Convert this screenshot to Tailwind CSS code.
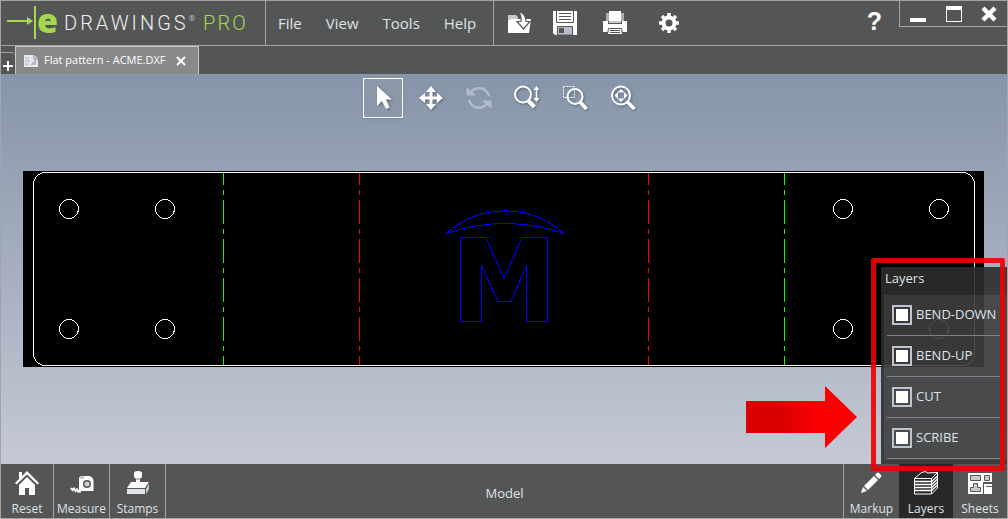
<!DOCTYPE html>
<html lang="en">
<head>
  <meta charset="UTF-8" />
  <meta name="viewport" content="width=device-width, initial-scale=1.0"/>
  <title>eDrawings Pro - Flat pattern - ACME.DXF</title>
  <script src="https://cdn.jsdelivr.net/npm/@tailwindcss/browser@4"></script>
</head>
<body class="h-screen flex flex-col overflow-hidden border border-[#a3a5a4] bg-[#545655] text-[#dfe3ea] font-['Open_Sans','Noto_Sans',sans-serif]">

  <!-- Title bar -->
  <header class="flex h-[45px] shrink-0 border-b border-[#a3a5a4]">
    <div class="flex w-[265px] shrink-0 items-center border-r border-[#a3a5a4] pl-[6px]">
      <svg class="h-9 w-[30px] shrink-0" viewBox="0 0 30 36" fill="#a6d84f">
        <path d="M0 15h20v-3l6 4-6 4v-3H0z"/>
        <path d="M27 1h2v33h-2z"/>
      </svg>
      <h1 class="flex items-center whitespace-nowrap font-['Roboto',sans-serif] text-[20px] leading-9 font-light">
        <span class="pb-[7px] font-['Open_Sans',sans-serif] text-[34px] leading-9 font-extrabold text-[#a6d84f]">e</span>
        <span class="ml-[6px] tracking-[3px] text-[#eceef2]">DRAWINGS</span>
        <span class="pb-2 text-[8px] leading-3">®</span>
        <span class="ml-2 tracking-[2px] text-[#a6d84f]">PRO</span>
      </h1>
    </div>

    <nav class="flex w-[228px] shrink-0 items-center gap-6 border-r border-[#a3a5a4] pl-3 text-[15px]">
      <button type="button">File</button>
      <button type="button">View</button>
      <button type="button">Tools</button>
      <button type="button">Help</button>
    </nav>

    <div class="flex items-center pl-[13px]">
      <button type="button" aria-label="Open">
        <svg class="size-6" viewBox="0 0 24 24">
          <path d="M1 4h8l2 2v5H1z" fill="#c9cbcb"/>
          <path d="M1 22V9l3 0V8h20l-2 14z" fill="#fff"/>
          <path d="M11 0.500C16 1.500 19 5 19 10.500h4L16.500 18 10 10.500h4C14.500 6 13.500 3 11 0.500z" fill="#fff" stroke="#545655" stroke-width="1.200"/>
        </svg>
      </button>
      <button type="button" aria-label="Save" class="ml-[22px]">
        <svg class="size-6" viewBox="0 0 24 24">
          <path d="M0 0h24v24H2l-2-2z" fill="#fff"/>
          <path d="M3.500 0v11.500h17V0" fill="none" stroke="#545655"/>
          <path d="M6 2.500h12M6 5.500h12M6 8.500h12" stroke="#545655"/>
          <path d="M4.500 15.500h15V24h-15z" fill="#b9bfcc" stroke="#545655"/>
          <path d="M6 17h5v5H6z" fill="#545655"/>
        </svg>
      </button>
      <button type="button" aria-label="Print" class="ml-[26px]">
        <svg class="size-6" viewBox="0 0 24 24">
          <path d="M3 2h18v8H3z" fill="#aeb0b0"/>
          <path d="M6 0h12v10H6z" fill="#fff"/>
          <path d="M0 10h5v3h14v-3h5v11H0z" fill="#fff"/>
          <path d="M6 10h12v2H6z" fill="#c9cbcb"/>
          <path d="M5.500 17.500h13l1 6h-15z" fill="#fff" stroke="#545655"/>
          <path d="M7 19.500h10M7 21.500h10" stroke="#545655"/>
        </svg>
      </button>
      <button type="button" aria-label="Options" class="ml-[30px]">
        <svg class="size-6" viewBox="0 0 24 24">
          <circle cx="12" cy="12" r="5.500" fill="none" stroke="#fff" stroke-width="4"/>
          <g stroke="#fff" stroke-width="3.500">
            <path d="M12 2v3M12 19v3M2 12h3M19 12h3"/>
            <path d="M5 5l2 2M17 17l2 2M5 19l2-2M17 7l2-2"/>
          </g>
        </svg>
      </button>
    </div>

    <button type="button" aria-label="Help topics" class="mr-[17px] ml-auto pb-1 font-['Liberation_Sans',sans-serif] text-[25px] leading-6 font-bold text-white">?</button>
    <div class="flex h-[26px] w-[108px] shrink-0 border-b border-l border-[#a3a5a4]">
      <button type="button" aria-label="Minimize" class="flex flex-1 items-center justify-center">
        <svg class="size-4" viewBox="0 0 16 16"><path d="M0 12h16v4H0z" fill="#fff"/></svg>
      </button>
      <button type="button" aria-label="Maximize" class="flex flex-1 items-center justify-center">
        <svg class="size-4" viewBox="0 0 16 16"><path d="M0 0h16v16H0zM1 4v11h14V4z" fill="#fff" fill-rule="evenodd"/></svg>
      </button>
      <button type="button" aria-label="Close" class="flex flex-1 items-center justify-center">
        <svg class="size-4" viewBox="0 0 16 16"><path d="M2 2l12 12M14 2L2 14" stroke="#fff" stroke-width="4.500"/></svg>
      </button>
    </div>
  </header>

  <!-- Document tabs -->
  <div class="flex h-7 shrink-0 items-end">
    <button type="button" aria-label="New tab" class="flex h-[22px] w-[14px] items-center justify-center rounded-tr border-t border-[#a3a5a4] pt-1">
      <svg class="size-[10px]" viewBox="0 0 10 10"><path d="M4 0h2v4h4v2H6v4H4V6H0V4h4z" fill="#fff"/></svg>
    </button>
    <div class="flex h-7 items-center border border-b-0 border-[#c4c8cc] bg-[#898989] px-2">
      <svg class="h-3 w-[14px]" viewBox="0 0 14 12">
        <path d="M0 0h10l4 4v8H0z" fill="#e4e7ee"/>
        <path d="M1 3h4M1 6h5M1 9h4" stroke="#aab0bd"/>
        <path d="M6 10l6-6v6z" fill="#b3b9c8"/>
        <path d="M10 0v4h4" fill="none" stroke="#898989"/>
      </svg>
      <span class="ml-[6px] text-[11px] text-white">Flat pattern - ACME.DXF</span>
      <button type="button" aria-label="Close tab" class="mr-1 ml-2.5">
        <svg class="size-[10px]" viewBox="0 0 10 10"><path d="M1 1l8 8M9 1L1 9" stroke="#fff" stroke-width="2"/></svg>
      </button>
    </div>
  </div>

  <!-- Viewport -->
  <main class="relative min-h-0 flex-1 bg-linear-to-b from-[#8695aa] to-[#c5c9d5]">
    <div class="flex justify-center gap-2 pt-1 pr-0.5">
      <button type="button" aria-label="Select" class="flex size-10 items-center justify-center border border-white bg-[#8c97a9] shadow-sm">
        <svg class="size-7 drop-shadow-[1px_1px_1px_#5b6675]" viewBox="0 0 28 28"><path d="M8 2v20l5-5 4 8 3.500-1.500L17 15.500h6z" fill="#fff"/></svg>
      </button>
      <button type="button" aria-label="Pan" class="flex size-10 items-center justify-center">
        <svg class="size-7 drop-shadow-[1px_1px_1px_#5b6675]" viewBox="0 0 28 28" fill="#fff">
          <path d="M14 2l5 6h-3.500v4.500H20V9l6 5-6 5v-3.500h-4.500V20H19l-5 6-5-6h3.500v-4.500H8V19l-6-5 6-5v3.500h4.500V8H9z"/>
        </svg>
      </button>
      <button type="button" aria-label="Rotate" class="flex size-10 items-center justify-center opacity-45">
        <svg class="size-7" viewBox="0 0 28 28" fill="none" stroke="#e3e7ee" stroke-width="2.500">
          <path d="M5 10c4-8 16-8 19 2"/>
          <path d="M23 18c-4 8-16 8-19-2"/>
          <path d="M2 4v7h8zM26 24v-7h-8z" fill="#e3e7ee" stroke-width="1"/>
        </svg>
      </button>
      <button type="button" aria-label="Zoom" class="flex size-10 items-center justify-center">
        <svg class="size-7 drop-shadow-[1px_1px_1px_#5b6675]" viewBox="0 0 28 28" fill="none" stroke="#fff">
          <circle cx="10" cy="10.500" r="8" stroke-width="2"/>
          <path d="M15.500 17l6 6" stroke-width="4"/>
          <path d="M23.500 4v12" stroke-width="1.500"/>
          <path d="M20.500 6l3-4 3 4zM20.500 14l3 4 3-4z" fill="#fff" stroke="none"/>
        </svg>
      </button>
      <button type="button" aria-label="Zoom to area" class="flex size-10 items-center justify-center">
        <svg class="size-7 drop-shadow-[1px_1px_1px_#5b6675]" viewBox="0 0 28 28" fill="none" stroke="#fff">
          <path d="M2.500 2.500h11v11h-11z" stroke-dasharray="2 1"/>
          <circle cx="14" cy="12.500" r="7.500" stroke-width="2"/>
          <path d="M19 18l6.500 7" stroke-width="3.500"/>
        </svg>
      </button>
      <button type="button" aria-label="Zoom to fit" class="flex size-10 items-center justify-center">
        <svg class="size-7 drop-shadow-[1px_1px_1px_#5b6675]" viewBox="0 0 28 28" fill="none" stroke="#fff">
          <circle cx="12" cy="11.500" r="9" stroke-width="2"/>
          <path d="M18.500 18l7 7" stroke-width="3.500"/>
          <path d="M12 5l3.500 3.500h-7zM12 18l3.500-3.500h-7zM5.500 11.500L9 8v7zM18.500 11.500L15 8v7z" fill="#fff" stroke="none"/>
        </svg>
      </button>
    </div>

    <!-- Flat pattern -->
    <div class="mt-[53px] mr-[23px] ml-[22px]">
      <svg class="block w-full bg-black" viewBox="0 0 961 196" fill="none" stroke="#fff" shape-rendering="crispEdges">
        <rect x="10.500" y="1.500" width="941" height="193" rx="12"/>
        <circle cx="46" cy="38" r="9.500"/>
        <circle cx="142" cy="38" r="9.500"/>
        <circle cx="46" cy="158" r="9.500"/>
        <circle cx="142" cy="158" r="9.500"/>
        <circle cx="820" cy="38" r="9.500"/>
        <circle cx="916" cy="38" r="9.500"/>
        <circle cx="820" cy="158" r="9.500"/>
        <circle cx="916" cy="158" r="9.500"/>
        <g stroke-dasharray="24 5 5 5" stroke-dashoffset="12">
          <path d="M200.500 2v192" stroke="#0f0"/>
          <path d="M336.500 2v192" stroke="#f00"/>
          <path d="M625.500 2v192" stroke="#f00"/>
          <path d="M761.500 2v192" stroke="#0f0"/>
        </g>
        <g stroke="#00f">
          <path d="M423.500 62.500A87 87 0 0 1 540.500 62.500A176 176 0 0 0 423.500 62.500z"/>
          <path d="M437.500 66.500H463L481 107.500L499 66.500H524.500V150.500H503.500V94.500L488 130.500H475L458.500 94.500V150.500H437.500z"/>
        </g>
      </svg>
    </div>

    <!-- Layers panel -->
    <section class="absolute right-0 bottom-0 w-[126px] bg-[#2c2c2c]/90 pl-[3px] pb-1">
      <h2 class="h-7 pl-px text-[13px] leading-[22px]">Layers</h2>
      <ul class="bg-white/8 pr-[7px] pb-px pl-[3px] text-[13px]">
        <li class="border-b border-[#7d8186]">
          <label class="flex h-10 items-center gap-1 pl-[5px] whitespace-nowrap">
            <input type="checkbox" checked class="size-5 shrink-0 appearance-none border-2 border-[#bcc4d2] p-[2px] checked:bg-white checked:bg-clip-content" />
            BEND-DOWN
          </label>
        </li>
        <li class="border-b border-[#7d8186]">
          <label class="flex h-10 items-center gap-1 pl-[5px] whitespace-nowrap">
            <input type="checkbox" checked class="size-5 shrink-0 appearance-none border-2 border-[#bcc4d2] p-[2px] checked:bg-white checked:bg-clip-content" />
            BEND-UP
          </label>
        </li>
        <li class="border-b border-[#7d8186]">
          <label class="flex h-10 items-center gap-1 pl-[5px] whitespace-nowrap">
            <input type="checkbox" checked class="size-5 shrink-0 appearance-none border-2 border-[#bcc4d2] p-[2px] checked:bg-white checked:bg-clip-content" />
            CUT
          </label>
        </li>
        <li class="border-b border-[#7d8186]">
          <label class="flex h-10 items-center gap-1 pl-[5px] whitespace-nowrap">
            <input type="checkbox" checked class="size-5 shrink-0 appearance-none border-2 border-[#bcc4d2] p-[2px] checked:bg-white checked:bg-clip-content" />
            SCRIBE
          </label>
        </li>
      </ul>
    </section>

    <!-- Callout -->
    <svg class="absolute right-[150px] bottom-4 h-[62px] w-[111px]" viewBox="0 0 111 62">
      <defs>
        <linearGradient id="arrow">
          <stop offset="0.300" stop-color="#dc0000"/>
          <stop offset="0.650" stop-color="#fa0000"/>
        </linearGradient>
      </defs>
      <path d="M0 15h79V0l32 31-32 31V47H0z" fill="url(#arrow)"/>
    </svg>
    <div class="pointer-events-none absolute right-[2px] -bottom-[7px] z-10 h-[213px] w-[134px] rounded-xs border-5 border-[#f00000]/90"></div>
  </main>

  <!-- Bottom bar -->
  <footer class="flex h-[54px] shrink-0 text-[12px] leading-4">
    <button type="button" class="flex w-[53px] flex-col items-center gap-[6px] border-r border-[#a3a5a4] pt-[7px]">
      <svg class="size-6" viewBox="0 0 24 24" fill="#fff">
        <path d="M12 0l12 12-1.500 1.500L12 3.500 1.500 13.500 0 12l4-4V1h3v4z"/>
        <path d="M4 14l8-8 8 8v10h-6v-7h-4v7H4z"/>
      </svg>
      Reset
    </button>
    <button type="button" class="flex w-14 flex-col items-center gap-[6px] border-r border-[#a3a5a4] pt-[7px]">
      <svg class="size-6" viewBox="0 0 24 24">
        <path d="M9 20V8q0-3 3-3h6q5 0 5.500 5v10z" fill="#fff"/>
        <path d="M10 5h4v3h-4z" fill="#c9cbcb"/>
        <circle cx="17" cy="13" r="4" fill="#545655"/>
        <circle cx="17" cy="13" r="2.500" fill="#c9cedb"/>
        <path d="M11 20.500H8l-1-2-1.500 1.500-1.500-2.500-1.500 1.500L1 17" fill="none" stroke="#fff" stroke-width="2"/>
      </svg>
      Measure
    </button>
    <button type="button" class="flex w-14 flex-col items-center gap-[6px] border-r border-[#a3a5a4] pt-[7px]">
      <svg class="size-6" viewBox="0 0 24 24">
        <path d="M8 2q0-2 4-2t4 2v4l-2 2v5h-4V8L8 6z" fill="#fff"/>
        <path d="M10 7h4v2h-4z" fill="#b9bfcc"/>
        <path d="M5 11h5v2h4v-2h9l-4 6H1z" fill="#fff"/>
        <path d="M1 18h18v5H1z" fill="#dfe3ea"/>
        <path d="M20 18l3-5v5l-3 5z" fill="#c9cedb"/>
      </svg>
      Stamps
    </button>
    <p class="flex-1 self-center pt-1 text-center text-[13px]">Model</p>
    <button type="button" class="flex w-14 flex-col items-center gap-[6px] border-l border-[#a3a5a4] pt-[7px]">
      <svg class="size-6" viewBox="0 0 24 24" fill="#fff">
        <path d="M1 22l2-6 4 4z"/>
        <path d="M4 15L14 5l4 4L8 19z"/>
        <path d="M15 4l2-2q1-1 2 0l2 2q1 1 0 2l-2 2z"/>
      </svg>
      Markup
    </button>
    <button type="button" class="flex w-[54px] flex-col items-center gap-[6px] bg-[#282828] pt-[7px]">
      <svg class="size-6" viewBox="0 0 24 24" fill="none" stroke="#fff">
        <path d="M.500 7.500L7.500 1.500 12 .500l1 1.500 10.500-.500-6 6z"/>
        <path d="M.500 7.500h17v15.500H.500zM17.500 23l6-6V1.500"/>
        <path d="M.500 10.500h17l6-5.500M.500 13.500h17l6-5.500M.500 16.500h17l6-5.500M.500 19.500h17l6-5.500" stroke-width="1.300"/>
      </svg>
      Layers
    </button>
    <button type="button" class="flex w-[54px] flex-col items-center gap-[6px] pt-[7px]">
      <svg class="size-6" viewBox="0 0 24 24">
        <path d="M0 2h24v9H0zM0 10h15v13H0zM16 13h8v10h-8z" fill="#fff"/>
        <g fill="#c9cbcb" stroke="#545655">
          <path d="M2.500 4.500h10v5h-10zM16.500 4.500h5v5h-5z"/>
          <path d="M5.500 12.500h4v4h3v4h-10v-4h3z"/>
        </g>
        <path d="M15 12h9M15.500 12v11M18 15.500h6" stroke="#545655"/>
      </svg>
      Sheets
    </button>
  </footer>
</body>
</html>
